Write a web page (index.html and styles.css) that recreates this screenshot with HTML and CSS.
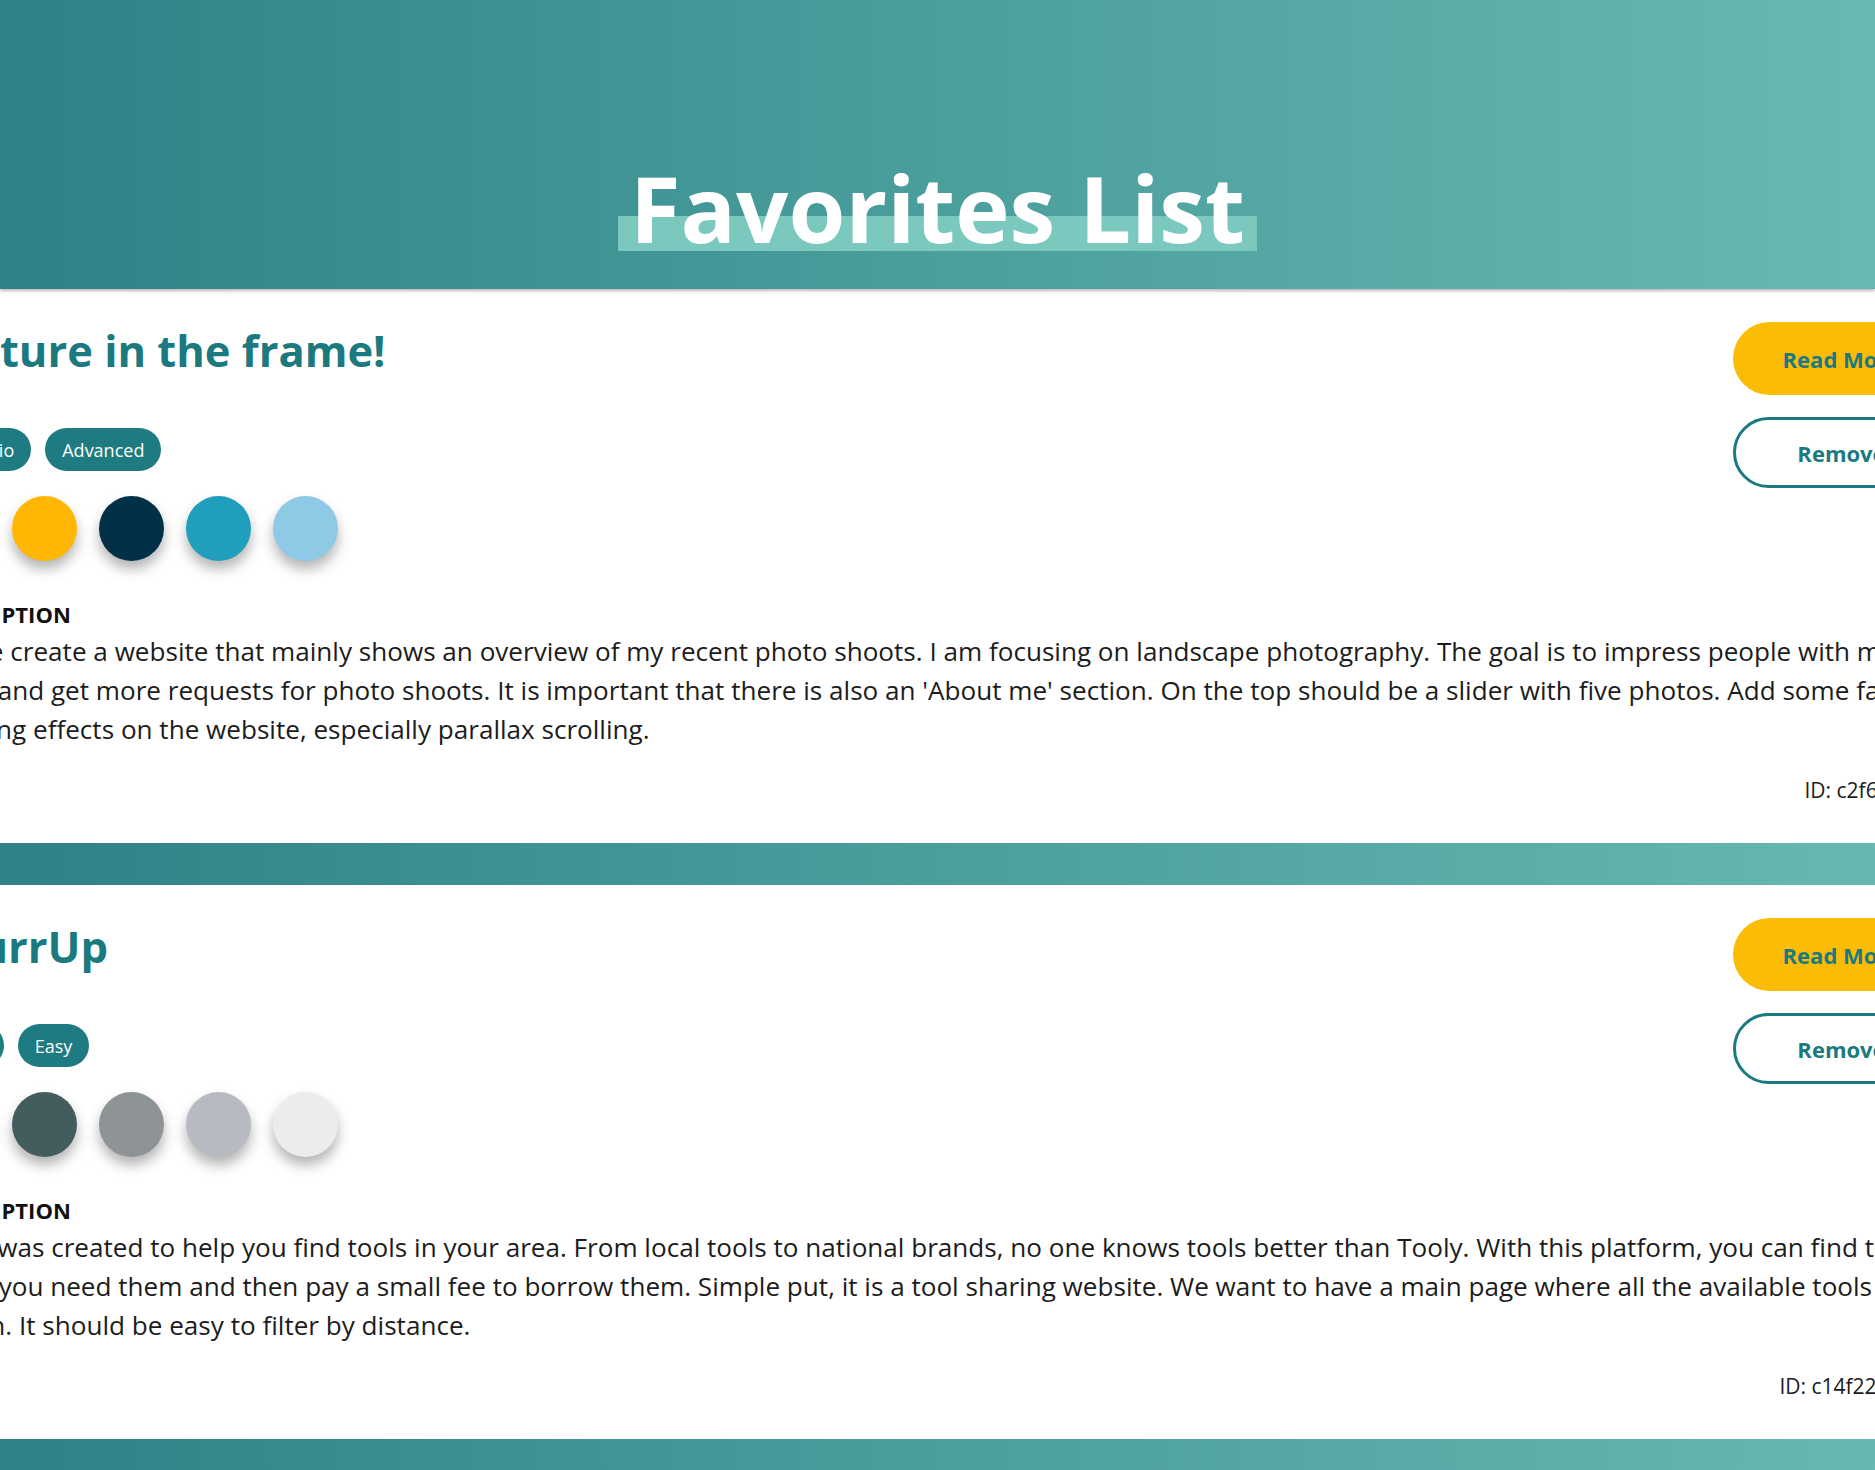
FILE: index.html
```html
<!DOCTYPE html>
<html lang="en">
<head>
<meta charset="utf-8">
<title>Favorites List</title>
<link rel="stylesheet" href="styles.css">
</head>
<body>
<header class="hero">
  <h1 class="hero-title"><span class="hero-mark">Favorites List</span></h1>
</header>
<main class="list">
  <article class="card">
    <div class="card-top">
      <div class="card-main">
        <h2 class="card-title">Picture in the frame!</h2>
        <ul class="tags">
          <li class="tag">Portfolio</li>
          <li class="tag">Advanced</li>
        </ul>
        <ul class="swatches">
          <li class="swatch sw-orange"></li>
          <li class="swatch sw-yellow"></li>
          <li class="swatch sw-navy"></li>
          <li class="swatch sw-blue"></li>
          <li class="swatch sw-sky"></li>
        </ul>
      </div>
      <div class="card-actions">
        <button class="btn btn-primary">Read More</button>
        <button class="btn btn-outline">Remove</button>
      </div>
    </div>
    <h3 class="desc-label">DESCRIPTION</h3>
    <p class="desc">Please create a website that mainly shows an overview of my recent photo shoots. I am focusing on landscape photography. The goal is to impress people with my shots and get more requests for photo shoots. It is important that there is also an 'About me' section. On the top should be a slider with five photos. Add some fancy scrolling effects on the website, especially parallax scrolling.</p>
    <div class="card-id">ID: c2f6a91d3e</div>
  </article>
  <article class="card">
    <div class="card-top">
      <div class="card-main">
        <h2 class="card-title">BlurrUp</h2>
        <ul class="tags">
          <li class="tag">Tools</li>
          <li class="tag">Easy</li>
        </ul>
        <ul class="swatches">
          <li class="swatch sw-g0"></li>
          <li class="swatch sw-g1"></li>
          <li class="swatch sw-g2"></li>
          <li class="swatch sw-g3"></li>
          <li class="swatch sw-g4"></li>
        </ul>
      </div>
      <div class="card-actions">
        <button class="btn btn-primary">Read More</button>
        <button class="btn btn-outline">Remove</button>
      </div>
    </div>
    <h3 class="desc-label">DESCRIPTION</h3>
    <p class="desc">Tooly was created to help you find tools in your area. From local tools to national brands, no one knows tools better than Tooly. With this platform, you can find tools when you need them and then pay a small fee to borrow them. Simple put, it is a tool sharing website. We want to have a main page where all the available tools are shown. It should be easy to filter by distance.</p>
    <div class="card-id">ID: c14f22b7d05a</div>
  </article>
</main>
</body>
</html>
```
FILE: styles.css
```css
* { box-sizing: border-box; }

html, body {
  margin: 0;
  padding: 0;
}

body {
  font-family: "Open Sans", "Liberation Sans", sans-serif;
  color: #1c1c1c;
  background: linear-gradient(to right, #2e8286 0%, #4a9e9c 50%, #66b8b0 100%);
  overflow-x: hidden;
  min-height: 1470px;
}

.hero {
  position: relative;
  z-index: 2;
  height: 289px;
  padding-top: 145px;
  display: flex;
  justify-content: center;
  align-items: flex-start;
  background: linear-gradient(to right, #2e8286 0%, #4a9e9c 50%, #68b9b1 100%);
  box-shadow: 0 2px 3px rgba(0, 0, 0, 0.28);
}

.hero-title {
  margin: 0;
  font-size: 92px;
  font-weight: 700;
  line-height: normal;
  color: #ffffff;
}

.hero-mark {
  display: inline-block;
  padding: 0 12px;
  background-image: linear-gradient(#7bc8be, #7bc8be);
  background-repeat: no-repeat;
  background-size: 100% 35px;
  background-position: 0 71px;
}

.list {
  display: flex;
  flex-direction: column;
  align-items: center;
  gap: 42px;
}

.card {
  flex: none;
  width: 2025px;
  background: #ffffff;
  padding: 34px 0 39px;
  box-shadow: -500px 0 0 #fff, 500px 0 0 #fff;
}

.card-top {
  display: flex;
  justify-content: space-between;
  align-items: flex-start;
}

.card-main {
  display: flex;
  flex-direction: column;
  align-items: flex-start;
}

.card-title {
  margin: -2px 0 0 12px;
  font-size: 43.5px;
  font-weight: 700;
  line-height: normal;
  color: #1b7a80;
}

.tags {
  list-style: none;
  margin: 48px 0 0;
  padding: 0;
  display: flex;
  gap: 14px;
}

.tag {
  height: 43px;
  padding: 0 17px;
  display: flex;
  align-items: center;
  border-radius: 22px;
  background: #1e7b81;
  color: #ffffff;
  font-size: 18px;
}

.swatches {
  list-style: none;
  margin: 25px 0 0;
  padding: 0;
  display: flex;
  gap: 22px;
}

.swatch {
  width: 65px;
  height: 65px;
  border-radius: 50%;
  box-shadow: 0 8px 13px rgba(0, 0, 0, 0.3);
}

.sw-orange { background: #fb8500; }
.sw-yellow { background: #ffb703; }
.sw-navy { background: #023047; }
.sw-blue { background: #219ebc; }
.sw-sky { background: #8ecae6; }

.sw-g0 { background: #2f3e46; }
.sw-g1 { background: #435c5d; }
.sw-g2 { background: #8e9396; }
.sw-g3 { background: #b8bac2; }
.sw-g4 { background: #ececef; }

.card-actions {
  display: flex;
  flex-direction: column;
  gap: 22px;
  margin-top: -1px;
}

.btn {
  width: 217px;
  height: 73px;
  border-radius: 37px;
  font-family: inherit;
  font-size: 22px;
  font-weight: 700;
  color: #1b7a80;
  cursor: pointer;
}

.btn-primary {
  background: #fbbc05;
  border: none;
}

.btn-outline {
  height: 71px;
  background: #ffffff;
  border: 3px solid #1b7a80;
}

.desc-label {
  margin: 38px 0 0;
  font-size: 22px;
  font-weight: 700;
  line-height: normal;
  color: #111;
}

.desc {
  margin: 3px 10px 0 0;
  font-size: 26.1px;
  line-height: 39px;
  color: #1c1c1c;
}

.card-id {
  margin-top: 27px;
  text-align: right;
  font-size: 21px;
  line-height: normal;
  color: #1c1c1c;
}
```
